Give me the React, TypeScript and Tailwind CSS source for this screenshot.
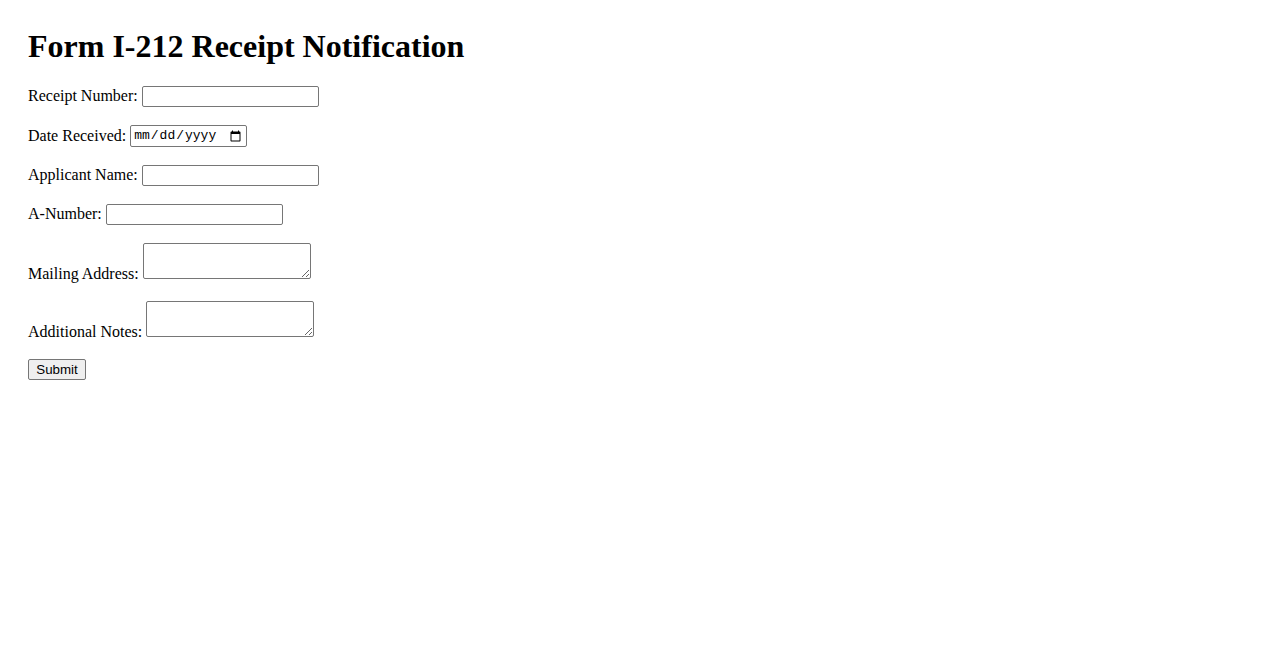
const labelCls = "text-[16px] leading-[18px] text-black mr-[4px]"
const inputCls =
  "w-[177px] h-[21px] border border-[#767676] rounded-[2px] px-[2px] bg-white text-[13.33px] leading-normal font-['Liberation_Sans',Arial,sans-serif]"
const areaCls =
  "w-[168px] h-[36px] border border-[#767676] rounded-[2px] px-[2px] py-[2px] bg-white text-[13px] font-['Liberation_Mono',monospace] block"

const App = () => {
  return (
    <div className="min-h-screen bg-white pl-[28px] pt-[28px] font-['Liberation_Serif','Times_New_Roman',serif] text-black">
      <h1 className="text-[32px] font-bold leading-[37px] mb-[21px]">
        Form I-212 Receipt Notification
      </h1>

      <form onSubmit={(e) => e.preventDefault()}>
        <div className="flex items-baseline mb-[18px]">
          <label className={labelCls}>Receipt Number:</label>
          <input type="text" className={inputCls} />
        </div>

        <div className="flex items-end mb-[18px]">
          <label className={labelCls + " !leading-none mb-[3px]"}>Date Received:</label>
          <input
            type="date"
            className="w-[117px] h-[22px] border border-[#767676] rounded-[2px] px-[2px] bg-white text-[13px] leading-normal font-['Liberation_Mono',monospace]"
          />
        </div>

        <div className="flex items-baseline mb-[18px]">
          <label className={labelCls}>Applicant Name:</label>
          <input type="text" className={inputCls} />
        </div>

        <div className="flex items-baseline mb-[18px]">
          <label className={labelCls}>A-Number:</label>
          <input type="text" className={inputCls} />
        </div>

        <div className="flex items-end mb-[22px]">
          <label className={labelCls + " !leading-none -mb-[3px]"}>Mailing Address:</label>
          <textarea className={areaCls} />
        </div>

        <div className="flex items-end mb-[20px]">
          <label className={labelCls + " !leading-none -mb-[3px]"}>Additional Notes:</label>
          <textarea className={areaCls} />
        </div>

        <button
          type="submit"
          className="w-[58px] h-[21px] border border-[#767676] rounded-[2px] bg-[#efefef] text-[13.33px] text-black font-['Liberation_Sans',Arial,sans-serif] leading-none"
        >
          Submit
        </button>
      </form>
    </div>
  )
}

export default App
